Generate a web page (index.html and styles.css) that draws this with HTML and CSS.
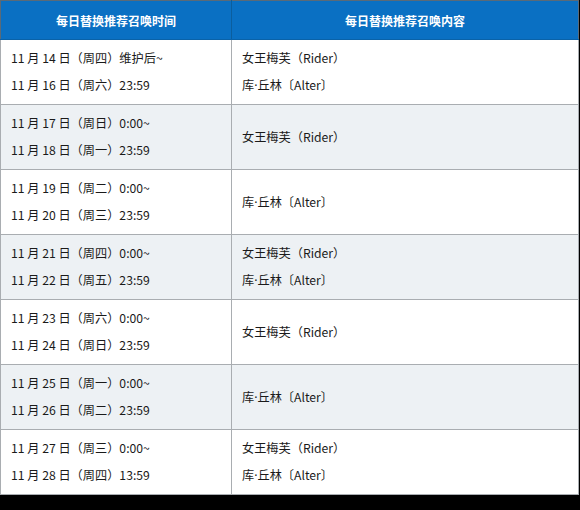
FILE: index.html
```html
<!DOCTYPE html>
<html lang="zh-CN">
<head>
<meta charset="utf-8">
<link rel="stylesheet" href="styles.css">
</head>
<body>
<table class="sched">
  <thead>
    <tr><th class="c1">每日替换推荐召唤时间</th><th class="c2">每日替换推荐召唤内容</th></tr>
  </thead>
  <tbody>
    <tr><td><div>11 月 14 日（周四）维护后~</div><div>11 月 16 日（周六）23:59</div></td><td><div>女王梅芙（Rider）</div><div>库<span class="dot">·</span>丘林〔Alter〕</div></td></tr>
    <tr class="alt"><td><div>11 月 17 日（周日）0:00~</div><div>11 月 18 日（周一）23:59</div></td><td><div>女王梅芙（Rider）</div></td></tr>
    <tr><td><div>11 月 19 日（周二）0:00~</div><div>11 月 20 日（周三）23:59</div></td><td><div>库<span class="dot">·</span>丘林〔Alter〕</div></td></tr>
    <tr class="alt"><td><div>11 月 21 日（周四）0:00~</div><div>11 月 22 日（周五）23:59</div></td><td><div>女王梅芙（Rider）</div><div>库<span class="dot">·</span>丘林〔Alter〕</div></td></tr>
    <tr><td><div>11 月 23 日（周六）0:00~</div><div>11 月 24 日（周日）23:59</div></td><td><div>女王梅芙（Rider）</div></td></tr>
    <tr class="alt"><td><div>11 月 25 日（周一）0:00~</div><div>11 月 26 日（周二）23:59</div></td><td><div>库<span class="dot">·</span>丘林〔Alter〕</div></td></tr>
    <tr><td><div>11 月 27 日（周三）0:00~</div><div>11 月 28 日（周四）13:59</div></td><td><div>女王梅芙（Rider）</div><div>库<span class="dot">·</span>丘林〔Alter〕</div></td></tr>
  </tbody>
</table>
</body>
</html>
```
FILE: styles.css
```css
html { background: #000; }
body {
  margin: 0;
  width: 580px;
  font-family: "Noto Sans CJK SC", "Noto Sans", sans-serif;
  color: #1a1a1a;
}
.sched {
  width: 579px;
  border-collapse: collapse;
  background: #fff;
  table-layout: fixed;
}
.sched th {
  background: #0a70c3;
  color: #fff;
  font-size: 12px;
  font-weight: bold;
  height: 38px;
  padding: 0;
  border: 1px solid #5a6a78;
  border-bottom: 1px solid #0a62a8;
}
.sched th.c1 { width: 230px; border-right: 1px solid #0b5e9e; }
.sched td {
  border: 1px solid #a9adb1;
  padding: 0 0 0 10px;
  height: 64px;
  font-size: 12.2px;
  line-height: 27px;
  vertical-align: middle;
}
.sched tr.alt td { background: #edf1f4; }
.dot { font-family: "Noto Sans", sans-serif; }
```
